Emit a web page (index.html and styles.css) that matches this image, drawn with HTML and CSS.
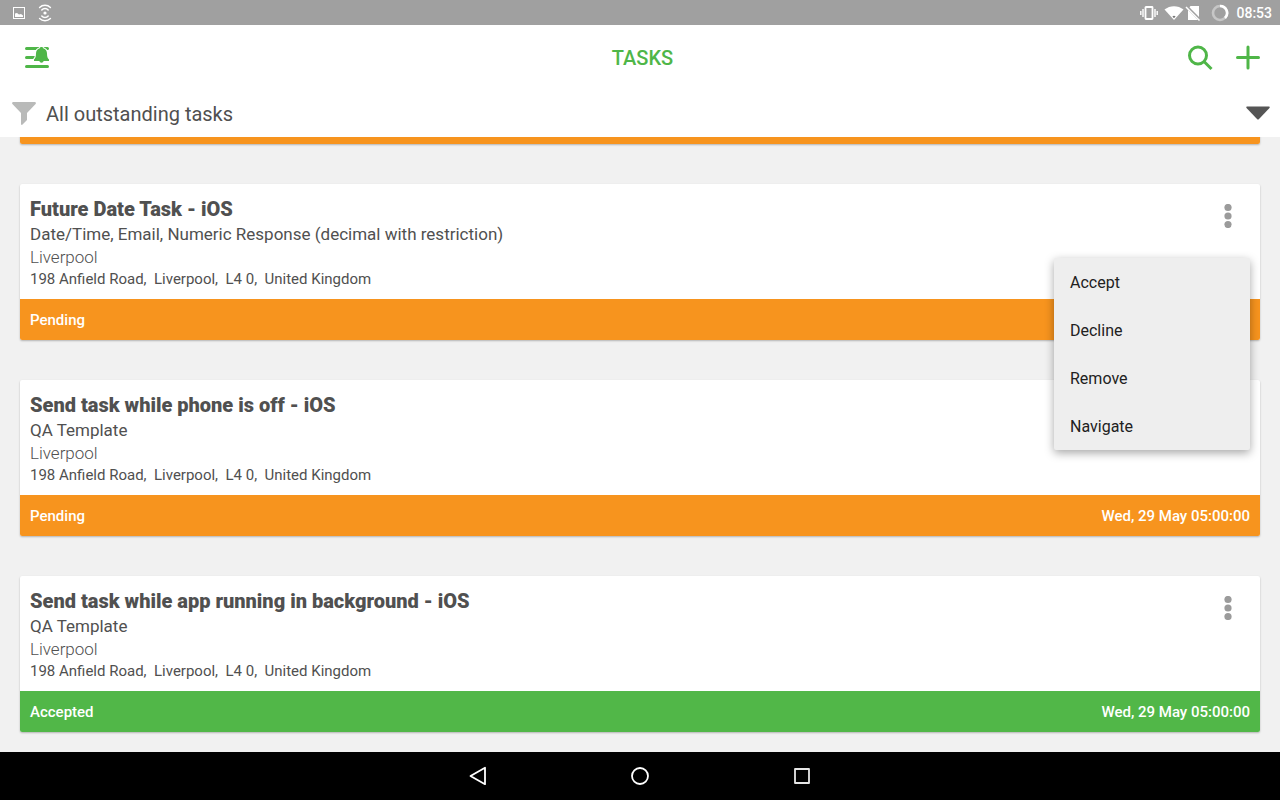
FILE: index.html
```
<!DOCTYPE html>
<html lang="en">
<head>
  <meta charset="UTF-8">
  <meta name="viewport" content="width=device-width, initial-scale=1">
  <title>Tasks</title>
  <link rel="stylesheet" href="styles.css">
</head>
<body>
  <div class="status-bar">
    <div class="status-left">
      <svg width="14" height="14" viewBox="0 0 14 14">
        <rect x="1.5" y="1.5" width="11" height="11" fill="none" stroke="#fff"/>
        <path d="M3 11V7.5l2-.5 2 1.5 2-.5 2 1.5V11z" fill="#fff"/>
      </svg>
      <svg width="16" height="18" viewBox="0 0 16 18" fill="none" stroke="#fff" stroke-width="1.5" stroke-linecap="round">
        <circle cx="8" cy="9" r="1.6" fill="#fff" stroke="none"/>
        <path d="M4.800 6a4.200 4.200 0 0 1 6.400 0M2.600 3.500a7.600 7.600 0 0 1 10.800 0M4.800 12a4.200 4.200 0 0 0 6.400 0M2.600 14.500a7.600 7.600 0 0 0 10.800 0"/>
      </svg>
    </div>
    <div class="status-right">
      <svg width="18" height="16" viewBox="0 0 18 16" fill="none" stroke="#fff">
        <rect x="5.5" y="2" width="7" height="12" rx="0.5" stroke-width="1.8"/>
        <path d="M3 4v8M15 4v8M0.8 6v4M17.2 6v4" stroke-width="1.4"/>
      </svg>
      <svg class="wifi" width="20" height="14" viewBox="0 0 20 14">
        <path d="M0.5 3.5C6-1 14-1 19.5 3.5L10 14z" fill="#fff"/>
        <path d="M8.4 10.4a2.4 2.4 0 0 1 3.2 0L10 12.2z" fill="#777"/>
      </svg>
      <svg class="no-sim" width="16" height="16" viewBox="0 0 16 16">
        <path d="M5.5 1H14v14H3V4z" fill="#fff"/>
        <path d="M1 1l14 14" stroke="#a0a0a0" stroke-width="3"/>
        <path d="M1 2l13.5 13.5" stroke="#fff" stroke-width="1.5"/>
      </svg>
      <svg width="18" height="18" viewBox="0 0 18 18" fill="none" stroke-width="2.6">
        <circle cx="9" cy="9" r="7" stroke="#c6c6c6"/>
        <path d="M9 2a7 7 0 0 1 5 12" stroke="#fff"/>
      </svg>
      <span class="clock">08:53</span>
    </div>
  </div>

  <header class="app-bar">
    <button class="icon-btn" aria-label="Menu">
      <svg width="26" height="24" viewBox="0 0 26 24">
        <path d="M2.5 2.5h21M2.5 11.5h14M2.5 20.5h21" stroke="#4fb648" stroke-width="3" stroke-linecap="round"/>
        <path d="M17.5 1c-1 0-1.5.5-1.7 1.2C13.2 3 12 4.8 12 7.5c0 3-.6 4.7-2 6V15h5.3a2.3 2.3 0 0 0 4.4 0H25v-1.5c-1.4-1.3-2-3-2-6 0-2.7-1.2-4.5-3.8-5.3C19 1.500 18.500 1 17.500 1z" fill="#4fb648" stroke="#fff" stroke-width="2" paint-order="stroke"/>
      </svg>
    </button>
    <h1>TASKS</h1>
    <div class="actions">
      <button class="icon-btn" aria-label="Search">
        <svg width="26" height="26" viewBox="0 0 26 26" fill="none" stroke="#4fb648" stroke-width="3">
          <circle cx="11" cy="10.5" r="8.5"/>
          <path d="M17 16.5l7.5 7.5"/>
        </svg>
      </button>
      <button class="icon-btn" aria-label="Add task">
        <svg width="26" height="26" viewBox="0 0 26 26" stroke="#4fb648" stroke-width="3" stroke-linecap="round">
          <path d="M13 2v21M2.5 12.5h21"/>
        </svg>
      </button>
    </div>
  </header>

  <button class="filter">
    <svg width="24" height="24" viewBox="0 0 24 24">
      <path d="M1 0h22q1.500.6.6 2L15 11v7l-5 5q-1 0-1-1V11L.4 2Q-.5.6 1 0z" fill="#b9bab9"/>
    </svg>
    <span>All outstanding tasks</span>
    <svg class="arrow" width="24" height="16" viewBox="0 0 24 16">
      <path d="M1 .5h22q1.200.5.5 1.500L13 13q-1 1-2 0L.5 2Q-.2 1 1 .5z" fill="#555"/>
    </svg>
  </button>

  <main class="task-list">
    <article class="card">
      <div class="card-footer pending"></div>
    </article>

    <article class="card">
      <div class="card-body">
        <div>
          <h2>Future Date Task - iOS</h2>
          <p class="template">Date/Time, Email, Numeric Response (decimal with restriction)</p>
          <p class="place">Liverpool</p>
          <p class="address">198 Anfield Road,&nbsp; Liverpool,&nbsp; L4 0,&nbsp; United Kingdom</p>
        </div>
        <button class="more" aria-label="More options">
          <svg width="8" height="24" viewBox="0 0 8 24" fill="#9b9b9b">
            <circle cx="4" cy="3.5" r="3.6"/><circle cx="4" cy="12" r="3.6"/><circle cx="4" cy="20.5" r="3.6"/>
          </svg>
        </button>
      </div>
      <div class="card-footer pending">
        <span>Pending</span>
      </div>
      <div class="popup" role="menu">
        <button role="menuitem">Accept</button>
        <button role="menuitem">Decline</button>
        <button role="menuitem">Remove</button>
        <button role="menuitem">Navigate</button>
      </div>
    </article>

    <article class="card">
      <div class="card-body">
        <div>
          <h2>Send task while phone is off - iOS</h2>
          <p class="template">QA Template</p>
          <p class="place">Liverpool</p>
          <p class="address">198 Anfield Road,&nbsp; Liverpool,&nbsp; L4 0,&nbsp; United Kingdom</p>
        </div>
        <button class="more" aria-label="More options">
          <svg width="8" height="24" viewBox="0 0 8 24" fill="#9b9b9b">
            <circle cx="4" cy="3.5" r="3.6"/><circle cx="4" cy="12" r="3.6"/><circle cx="4" cy="20.5" r="3.6"/>
          </svg>
        </button>
      </div>
      <div class="card-footer pending">
        <span>Pending</span>
        <span>Wed, 29 May 05:00:00</span>
      </div>
    </article>

    <article class="card">
      <div class="card-body">
        <div>
          <h2>Send task while app running in background - iOS</h2>
          <p class="template">QA Template</p>
          <p class="place">Liverpool</p>
          <p class="address">198 Anfield Road,&nbsp; Liverpool,&nbsp; L4 0,&nbsp; United Kingdom</p>
        </div>
        <button class="more" aria-label="More options">
          <svg width="8" height="24" viewBox="0 0 8 24" fill="#9b9b9b">
            <circle cx="4" cy="3.5" r="3.6"/><circle cx="4" cy="12" r="3.6"/><circle cx="4" cy="20.5" r="3.6"/>
          </svg>
        </button>
      </div>
      <div class="card-footer accepted">
        <span>Accepted</span>
        <span>Wed, 29 May 05:00:00</span>
      </div>
    </article>
  </main>

  <nav class="nav-bar">
    <button aria-label="Back">
      <svg width="20" height="20" viewBox="0 0 20 20" fill="none" stroke="#fff" stroke-width="1.8" stroke-linejoin="round">
        <path d="M17 1.8v16.4L2.5 10z"/>
      </svg>
    </button>
    <button aria-label="Home">
      <svg width="20" height="20" viewBox="0 0 20 20" fill="none" stroke="#fff" stroke-width="1.8">
        <circle cx="10" cy="10" r="8"/>
      </svg>
    </button>
    <button aria-label="Recent apps">
      <svg width="20" height="20" viewBox="0 0 20 20" fill="none" stroke="#e6e6e6" stroke-width="1.8" stroke-linejoin="round">
        <rect x="3" y="3" width="14" height="14"/>
      </svg>
    </button>
  </nav>
</body>
</html>
```
FILE: styles.css
```
* {
  box-sizing: border-box;
}
body {
  margin: 0;
  height: 100vh;
  display: flex;
  flex-direction: column;
  font-family: Roboto, sans-serif;
  color: #505050;
  background: #f1f1f1;
}
h1, h2, p {
  margin: 0;
}
button {
  font: inherit;
  color: inherit;
  background: none;
  border: none;
  padding: 0;
  cursor: pointer;
}
svg {
  display: block;
  flex-shrink: 0;
}

/* system status bar */
.status-bar {
  flex-shrink: 0;
  display: flex;
  justify-content: space-between;
  align-items: center;
  height: 25px;
  padding: 0 8px 0 12px;
  background: #a0a0a0;
  color: #fff;
}
.status-left, .status-right {
  display: flex;
  align-items: center;
}
.status-left {
  gap: 11px;
}
.wifi {
  margin-left: 6px;
}
.no-sim {
  margin: 0 10px 0 1px;
}
.clock {
  margin-left: 7px;
  font-size: 14px;
  font-weight: 500;
}

/* title bar */
.app-bar {
  flex-shrink: 0;
  display: grid;
  grid-template-columns: 1fr auto 1fr;
  align-items: center;
  height: 65px;
  padding: 0 19px 0 24px;
  background: #fff;
}
.app-bar h1 {
  font-size: 20px;
  font-weight: 500;
  color: #4fb648;
}
.icon-btn {
  justify-self: start;
}
.actions {
  display: flex;
  justify-self: end;
  gap: 22px;
}

.filter {
  flex-shrink: 0;
  display: flex;
  align-items: center;
  gap: 10px;
  height: 47px;
  padding: 0 10px 0 12px;
  background: #fff;
  font-size: 20px;
}
.arrow {
  margin-left: auto;
}

/* tasks */
.task-list {
  flex: 1;
  min-height: 0;
  display: flex;
  flex-direction: column;
  justify-content: flex-end;
  gap: 40px;
  padding: 0 20px 20px;
  overflow: hidden;
}
.card {
  position: relative;
  flex-shrink: 0;
  background: #fff;
  border-radius: 2px;
  box-shadow: 0 1px 2px rgba(0,0,0,0.25);
}
.card-body {
  display: flex;
  justify-content: space-between;
  align-items: flex-start;
  padding: 13px 10px 9px;
}
.card h2 {
  font-size: 20px;
  font-weight: 900;
  line-height: 25px;
}
.template {
  font-size: 17px;
  line-height: 24px;
}
.place {
  font-size: 17px;
  font-weight: 300;
  line-height: 22px;
}
.address {
  font-size: 15px;
  line-height: 22px;
}
.more {
  padding: 7px 18px;
}
.card-footer {
  display: flex;
  justify-content: space-between;
  align-items: center;
  height: 41px;
  padding: 0 10px;
  border-radius: 0 0 2px 2px;
  font-size: 15px;
  font-weight: 500;
  color: #fff;
}
.pending {
  background: #f7941e;
}
.accepted {
  background: #51b748;
}

.popup {
  position: absolute;
  top: 74px;
  right: 10px;
  z-index: 1;
  width: 196px;
  background: #eee;
  border-radius: 2px;
  box-shadow: 0 3px 10px rgba(0,0,0,0.35);
}
.popup button {
  display: block;
  width: 100%;
  height: 48px;
  padding: 0 16px;
  text-align: left;
  font-size: 16px;
  color: #212121;
}

/* system navigation */
.nav-bar {
  flex-shrink: 0;
  display: flex;
  justify-content: center;
  align-items: center;
  gap: 142px;
  height: 48px;
  background: #000;
}
```
